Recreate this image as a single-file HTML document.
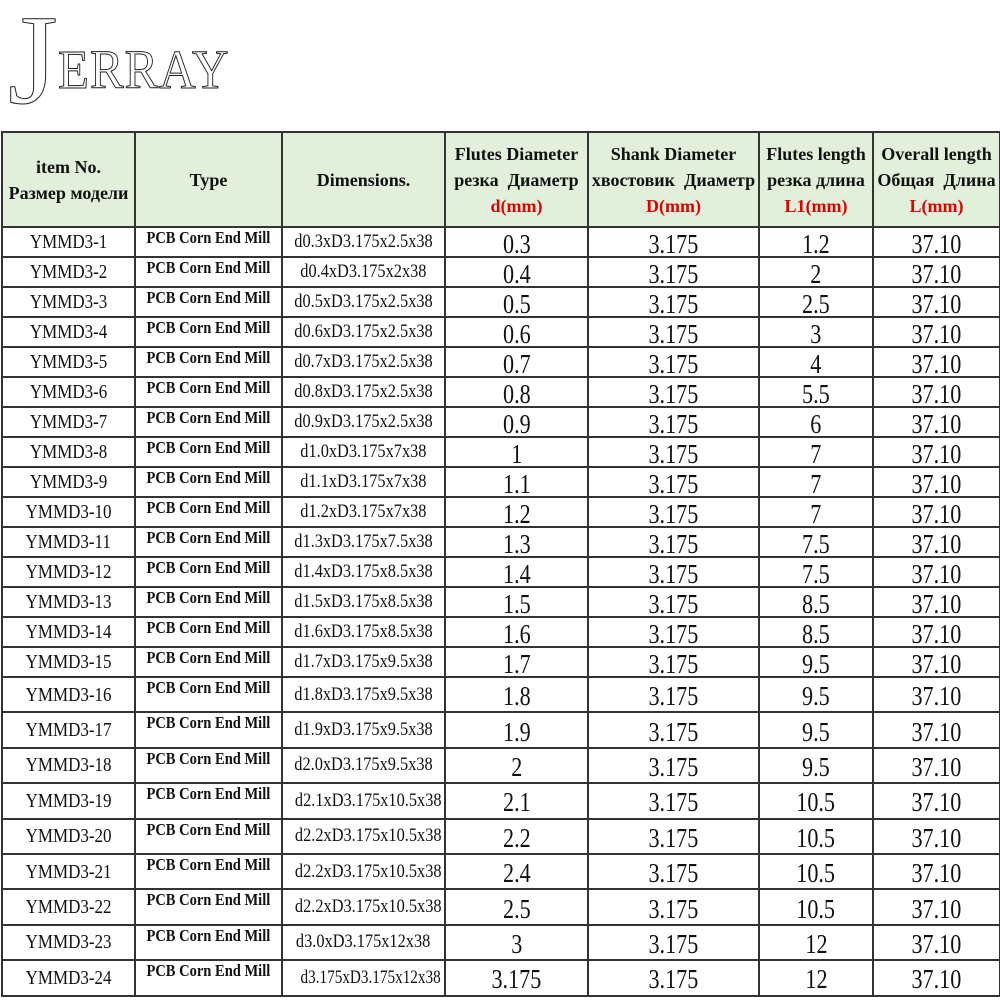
<!DOCTYPE html>
<html><head><meta charset="utf-8"><style>
body{margin:0;width:1000px;height:1000px;background:#fff;overflow:hidden;position:relative;font-family:"Liberation Serif",serif;color:#111}
.logo{position:absolute;left:8px;top:0;font-family:"Liberation Serif",serif;color:#fff;-webkit-text-stroke:1px #222}
.J{position:absolute;left:0;top:-4px;font-size:128px;line-height:128px}
.E{position:absolute;left:50px;top:40px;font-size:55px;line-height:60px;letter-spacing:1px;transform:scaleX(.92);transform-origin:left}
table{position:absolute;left:1px;top:131px;border-collapse:collapse;table-layout:fixed;width:998px}
td{border:2px solid #333;text-align:center;padding:0;overflow:hidden;white-space:nowrap}
thead td{background:#e2efda;font-weight:bold;font-size:18px;line-height:26px;vertical-align:middle}
.r{color:#e00000}
tbody td{line-height:20px}
tbody tr{height:30px}
tbody tr.t{height:35.4px}
.i{font-size:20px;vertical-align:middle}
.i span,.d span,.v span{display:inline-block;transform:scaleX(.85)}
.ty{font-size:16.5px;font-weight:bold;vertical-align:top;line-height:19px}
.ty span{display:inline-block;transform:scaleX(.88)}
.d{font-size:19px;vertical-align:middle}
.d span{transform:scaleX(.86)}
.d span.n{transform:scaleX(.8)}
.v{font-size:27px;vertical-align:middle;line-height:22px;padding-top:3px}
.v span{transform:scaleX(.82)}
</style></head><body>
<div class="logo"><div class="J">J</div><div class="E">ERRAY</div></div>
<table>
<colgroup><col style="width:133px"><col style="width:147px"><col style="width:163px"><col style="width:143px"><col style="width:171px"><col style="width:114px"><col style="width:127px"></colgroup>
<thead><tr style="height:95px">
<td>item No.<br>Размер модели</td><td>Type</td><td>Dimensions.</td>
<td>Flutes Diameter<br>резка&nbsp; Диаметр<br><span class="r">d(mm)</span></td>
<td>Shank Diameter<br>хвостовик&nbsp; Диаметр<br><span class="r">D(mm)</span></td>
<td>Flutes length<br>резка длина<br><span class="r">L1(mm)</span></td>
<td>Overall length<br>Общая&nbsp; Длина<br><span class="r">L(mm)</span></td>
</tr></thead>
<tbody>
<tr><td class="i"><span>YMMD3-1</span></td><td class="ty"><span>PCB Corn End Mill</span></td><td class="d"><span>d0.3xD3.175x2.5x38</span></td><td class="v"><span>0.3</span></td><td class="v"><span>3.175</span></td><td class="v"><span>1.2</span></td><td class="v"><span>37.10</span></td></tr>
<tr><td class="i"><span>YMMD3-2</span></td><td class="ty"><span>PCB Corn End Mill</span></td><td class="d"><span>d0.4xD3.175x2x38</span></td><td class="v"><span>0.4</span></td><td class="v"><span>3.175</span></td><td class="v"><span>2</span></td><td class="v"><span>37.10</span></td></tr>
<tr><td class="i"><span>YMMD3-3</span></td><td class="ty"><span>PCB Corn End Mill</span></td><td class="d"><span>d0.5xD3.175x2.5x38</span></td><td class="v"><span>0.5</span></td><td class="v"><span>3.175</span></td><td class="v"><span>2.5</span></td><td class="v"><span>37.10</span></td></tr>
<tr><td class="i"><span>YMMD3-4</span></td><td class="ty"><span>PCB Corn End Mill</span></td><td class="d"><span>d0.6xD3.175x2.5x38</span></td><td class="v"><span>0.6</span></td><td class="v"><span>3.175</span></td><td class="v"><span>3</span></td><td class="v"><span>37.10</span></td></tr>
<tr><td class="i"><span>YMMD3-5</span></td><td class="ty"><span>PCB Corn End Mill</span></td><td class="d"><span>d0.7xD3.175x2.5x38</span></td><td class="v"><span>0.7</span></td><td class="v"><span>3.175</span></td><td class="v"><span>4</span></td><td class="v"><span>37.10</span></td></tr>
<tr><td class="i"><span>YMMD3-6</span></td><td class="ty"><span>PCB Corn End Mill</span></td><td class="d"><span>d0.8xD3.175x2.5x38</span></td><td class="v"><span>0.8</span></td><td class="v"><span>3.175</span></td><td class="v"><span>5.5</span></td><td class="v"><span>37.10</span></td></tr>
<tr><td class="i"><span>YMMD3-7</span></td><td class="ty"><span>PCB Corn End Mill</span></td><td class="d"><span>d0.9xD3.175x2.5x38</span></td><td class="v"><span>0.9</span></td><td class="v"><span>3.175</span></td><td class="v"><span>6</span></td><td class="v"><span>37.10</span></td></tr>
<tr><td class="i"><span>YMMD3-8</span></td><td class="ty"><span>PCB Corn End Mill</span></td><td class="d"><span>d1.0xD3.175x7x38</span></td><td class="v"><span>1</span></td><td class="v"><span>3.175</span></td><td class="v"><span>7</span></td><td class="v"><span>37.10</span></td></tr>
<tr><td class="i"><span>YMMD3-9</span></td><td class="ty"><span>PCB Corn End Mill</span></td><td class="d"><span>d1.1xD3.175x7x38</span></td><td class="v"><span>1.1</span></td><td class="v"><span>3.175</span></td><td class="v"><span>7</span></td><td class="v"><span>37.10</span></td></tr>
<tr><td class="i"><span>YMMD3-10</span></td><td class="ty"><span>PCB Corn End Mill</span></td><td class="d"><span>d1.2xD3.175x7x38</span></td><td class="v"><span>1.2</span></td><td class="v"><span>3.175</span></td><td class="v"><span>7</span></td><td class="v"><span>37.10</span></td></tr>
<tr><td class="i"><span>YMMD3-11</span></td><td class="ty"><span>PCB Corn End Mill</span></td><td class="d"><span>d1.3xD3.175x7.5x38</span></td><td class="v"><span>1.3</span></td><td class="v"><span>3.175</span></td><td class="v"><span>7.5</span></td><td class="v"><span>37.10</span></td></tr>
<tr><td class="i"><span>YMMD3-12</span></td><td class="ty"><span>PCB Corn End Mill</span></td><td class="d"><span>d1.4xD3.175x8.5x38</span></td><td class="v"><span>1.4</span></td><td class="v"><span>3.175</span></td><td class="v"><span>7.5</span></td><td class="v"><span>37.10</span></td></tr>
<tr><td class="i"><span>YMMD3-13</span></td><td class="ty"><span>PCB Corn End Mill</span></td><td class="d"><span>d1.5xD3.175x8.5x38</span></td><td class="v"><span>1.5</span></td><td class="v"><span>3.175</span></td><td class="v"><span>8.5</span></td><td class="v"><span>37.10</span></td></tr>
<tr><td class="i"><span>YMMD3-14</span></td><td class="ty"><span>PCB Corn End Mill</span></td><td class="d"><span>d1.6xD3.175x8.5x38</span></td><td class="v"><span>1.6</span></td><td class="v"><span>3.175</span></td><td class="v"><span>8.5</span></td><td class="v"><span>37.10</span></td></tr>
<tr><td class="i"><span>YMMD3-15</span></td><td class="ty"><span>PCB Corn End Mill</span></td><td class="d"><span>d1.7xD3.175x9.5x38</span></td><td class="v"><span>1.7</span></td><td class="v"><span>3.175</span></td><td class="v"><span>9.5</span></td><td class="v"><span>37.10</span></td></tr>
<tr class="t"><td class="i"><span>YMMD3-16</span></td><td class="ty"><span>PCB Corn End Mill</span></td><td class="d"><span>d1.8xD3.175x9.5x38</span></td><td class="v"><span>1.8</span></td><td class="v"><span>3.175</span></td><td class="v"><span>9.5</span></td><td class="v"><span>37.10</span></td></tr>
<tr class="t"><td class="i"><span>YMMD3-17</span></td><td class="ty"><span>PCB Corn End Mill</span></td><td class="d"><span>d1.9xD3.175x9.5x38</span></td><td class="v"><span>1.9</span></td><td class="v"><span>3.175</span></td><td class="v"><span>9.5</span></td><td class="v"><span>37.10</span></td></tr>
<tr class="t"><td class="i"><span>YMMD3-18</span></td><td class="ty"><span>PCB Corn End Mill</span></td><td class="d"><span>d2.0xD3.175x9.5x38</span></td><td class="v"><span>2</span></td><td class="v"><span>3.175</span></td><td class="v"><span>9.5</span></td><td class="v"><span>37.10</span></td></tr>
<tr class="t"><td class="i"><span>YMMD3-19</span></td><td class="ty"><span>PCB Corn End Mill</span></td><td class="d"><span>d2.1xD3.175x10.5x38</span></td><td class="v"><span>2.1</span></td><td class="v"><span>3.175</span></td><td class="v"><span>10.5</span></td><td class="v"><span>37.10</span></td></tr>
<tr class="t"><td class="i"><span>YMMD3-20</span></td><td class="ty"><span>PCB Corn End Mill</span></td><td class="d"><span>d2.2xD3.175x10.5x38</span></td><td class="v"><span>2.2</span></td><td class="v"><span>3.175</span></td><td class="v"><span>10.5</span></td><td class="v"><span>37.10</span></td></tr>
<tr class="t"><td class="i"><span>YMMD3-21</span></td><td class="ty"><span>PCB Corn End Mill</span></td><td class="d"><span>d2.2xD3.175x10.5x38</span></td><td class="v"><span>2.4</span></td><td class="v"><span>3.175</span></td><td class="v"><span>10.5</span></td><td class="v"><span>37.10</span></td></tr>
<tr class="t"><td class="i"><span>YMMD3-22</span></td><td class="ty"><span>PCB Corn End Mill</span></td><td class="d"><span>d2.2xD3.175x10.5x38</span></td><td class="v"><span>2.5</span></td><td class="v"><span>3.175</span></td><td class="v"><span>10.5</span></td><td class="v"><span>37.10</span></td></tr>
<tr class="t"><td class="i"><span>YMMD3-23</span></td><td class="ty"><span>PCB Corn End Mill</span></td><td class="d"><span>d3.0xD3.175x12x38</span></td><td class="v"><span>3</span></td><td class="v"><span>3.175</span></td><td class="v"><span>12</span></td><td class="v"><span>37.10</span></td></tr>
<tr class="t"><td class="i"><span>YMMD3-24</span></td><td class="ty"><span>PCB Corn End Mill</span></td><td class="d"><span class="n">d3.175xD3.175x12x38</span></td><td class="v"><span>3.175</span></td><td class="v"><span>3.175</span></td><td class="v"><span>12</span></td><td class="v"><span>37.10</span></td></tr>
</tbody></table>
</body></html>
